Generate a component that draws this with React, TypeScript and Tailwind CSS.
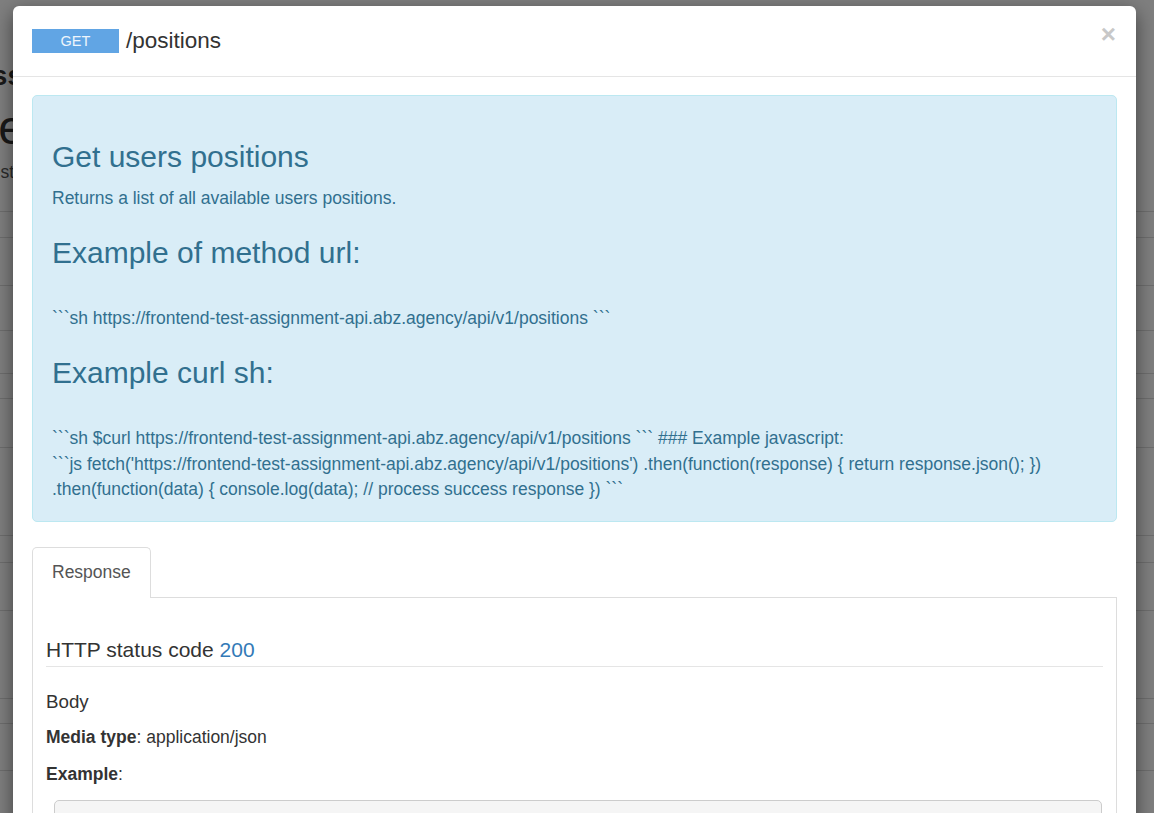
const bgRows = [
  "h-[26px]",
  "h-[48px]",
  "h-[45px]",
  "h-[43px]",
  "h-[25px]",
  "h-[49px]",
  "h-[88px]",
  "h-[27px]",
  "h-[48px]",
  "h-[88px]",
  "h-[25px]",
  "h-[47px]",
  "h-[48px]",
];

const BackgroundPage = () => (
  <div className="pt-[59px]">
    <div className="flex w-[23px] justify-end overflow-hidden">
      <span className="whitespace-nowrap text-[28px] font-bold leading-[34px] text-[#333]">
        Access
      </span>
    </div>
    <div className="mt-[11px] flex w-[25px] justify-end overflow-hidden">
      <span className="whitespace-nowrap text-[48px] leading-[48px] text-[#333]">
        Reference
      </span>
    </div>
    <div className="mt-[8px] flex w-[14px] justify-end overflow-hidden">
      <span className="whitespace-nowrap text-[#555]">frontend test</span>
    </div>
    <div className="mt-[26px]">
      {bgRows.map((h, i) => (
        <div key={i} className={`${h} border-t border-[#ddd]`} />
      ))}
    </div>
  </div>
);

export default function App() {
  return (
    <div className="relative h-[813px] w-[1154px] overflow-hidden bg-white font-['Liberation_Sans',Arial,sans-serif] text-[17.5px] leading-[25px] text-[#333]">
      <BackgroundPage />

      {/* backdrop */}
      <div className="absolute inset-0 bg-black/50" />

      {/* modal */}
      <div className="absolute left-[13px] top-[6px] w-[1123px] rounded-[6px] bg-white shadow-[0_6px_19px_rgba(0,0,0,0.5)]">
        <div className="flex items-center border-b border-[#e5e5e5] p-[19px]">
          <span className="flex h-[24px] w-[87px] items-center justify-center bg-[#61a5e4] text-[14.5px] leading-none text-[#eef5fc]">
            GET
          </span>
          <h4 className="ml-[7px] text-[22.5px] leading-[32px] text-[#333]">
            /positions
          </h4>
          <button className="ml-auto -mt-[4px] mr-[1px] self-start text-[26px] font-bold leading-none text-[#c8c8c8]">
            ×
          </button>
        </div>

        <div className="px-[19px] pt-[18px]">
          <div className="rounded-[5px] border border-[#bce8f1] bg-[#d9edf7] px-[19px] pb-[18px] pt-[19px] text-[#31708f]">
            <h3 className="mt-[25px] text-[30px] leading-[33px]">
              Get users positions
            </h3>
            <p className="mt-[13px]">
              Returns a list of all available users positions.
            </p>
            <h3 className="mt-[25px] text-[30px] leading-[33px]">
              Example of method url:
            </h3>
            <p className="mt-[37px]">
              ```sh https://frontend-test-assignment-api.abz.agency/api/v1/positions ```
            </p>
            <h3 className="mt-[25px] text-[30px] leading-[33px]">
              Example curl sh:
            </h3>
            <p className="mt-[37px] leading-[25.5px]">
              ```sh $curl https://frontend-test-assignment-api.abz.agency/api/v1/positions ``` ### Example javascript:
              <br />
              ```js fetch('https://frontend-test-assignment-api.abz.agency/api/v1/positions') .then(function(response) {"{"} return response.json(); {"}"})
              <br />
              .then(function(data) {"{"} console.log(data); // process success response {"}"}) ```
            </p>
          </div>

          {/* tabs */}
          <div className="mt-[25px] flex">
            <div className="rounded-t-[5px] border border-b-0 border-[#ddd] bg-white px-[19px] py-[12.5px] text-[#555]">
              Response
            </div>
            <div className="flex-1 border-b border-[#ddd]" />
          </div>
          <div className="border border-t-0 border-[#ddd] px-[13px] pt-[40px]">
            <h4 className="border-b border-[#e5e5e5] pb-[5px] text-[21px] leading-[23px] text-[#333]">
              HTTP status code <span className="text-[#337ab7]">200</span>
            </h4>
            <h5 className="mt-[24px] text-[18.75px] leading-[21px]">Body</h5>
            <p className="mt-[13.5px]">
              <b>Media type</b>: application/json
            </p>
            <p className="mt-[12px]">
              <b>Example</b>:
            </p>
            <pre className="ml-[8px] mr-[1px] mt-[13px] h-[200px] rounded-[5px] border border-[#ccc] bg-[#f5f5f5]" />
          </div>
        </div>
      </div>
    </div>
  );
}
